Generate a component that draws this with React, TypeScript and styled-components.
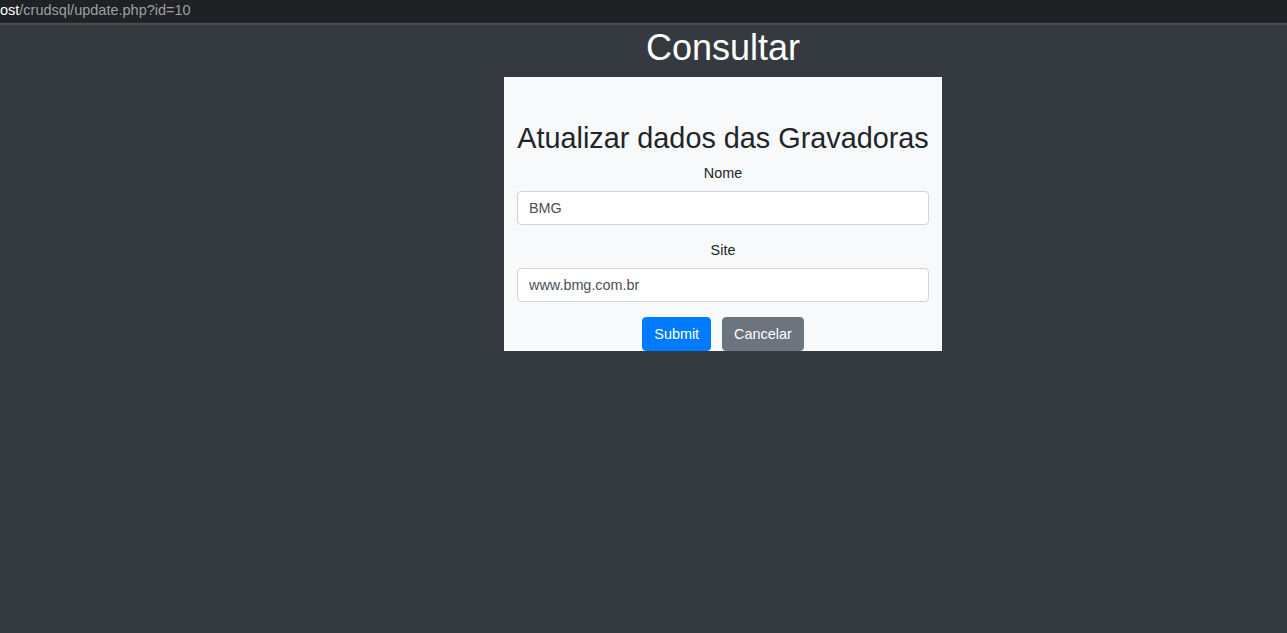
import React from "react";
import styled, { createGlobalStyle } from "styled-components";

const GlobalStyle = createGlobalStyle`
  html, body {
    margin: 0;
    padding: 0;
    background: #343a40;
    font-family: "Liberation Sans", Arial, sans-serif;
  }
  * { box-sizing: border-box; }
`;

const Page = styled.div`
  width: 1287px;
  height: 633px;
  background: #343a40;
  overflow: hidden;
`;

const AddressBar = styled.div`
  height: 23px;
  padding-bottom: 2px;
  background: #202124;
  border-bottom: 1px solid #2a2b2e;
  display: flex;
  align-items: center;
  font-family: "Liberation Sans", Arial, sans-serif;
  font-size: 14.5px;
  color: #9aa0a6;
  white-space: nowrap;
`;

const Host = styled.span`
  color: #ffffff;
`;

const Divider = styled.div`
  height: 2px;
  background: #4a4c50;
`;

const Main = styled.main`
  display: grid;
  grid-template-columns: 504px 438px 1fr;
`;

const Column = styled.div`
  grid-column: 2;
  display: flex;
  flex-direction: column;
`;

const PageTitle = styled.h1`
  margin: 1px 0 8px;
  font-size: 36px;
  line-height: 43px;
  font-weight: 400;
  color: #ffffff;
  text-align: center;
  white-space: nowrap;
`;

const Panel = styled.form`
  background: #f8f9fa;
  padding: 44px 13px 0;
  height: 274px;
  overflow: hidden;
  text-align: center;
`;

const PanelTitle = styled.h3`
  margin: 0 0 6px;
  font-size: 28.8px;
  line-height: 35px;
  font-weight: 400;
  color: #212529;
  white-space: nowrap;
`;

const Group = styled.div<{ $last?: boolean }>`
  margin-bottom: ${(p) => (p.$last ? "15px" : "14px")};
`;

const Label = styled.label`
  display: block;
  margin-bottom: 7px;
  font-size: 14.4px;
  line-height: 22px;
  color: #212529;
`;

const Input = styled.input`
  display: block;
  width: 100%;
  height: 34px;
  padding: 0 11px;
  font-family: "Liberation Sans", Arial, sans-serif;
  font-size: 14.4px;
  color: #495057;
  background: #ffffff;
  border: 1px solid #ced4da;
  border-radius: 4px;
  outline: none;
`;

const Actions = styled.div`
  display: flex;
  justify-content: center;
  gap: 11px;
`;

const Button = styled.button<{ $variant: "primary" | "secondary" }>`
  height: 34px;
  padding: 0 11px;
  font-family: "Liberation Sans", Arial, sans-serif;
  font-size: 14.4px;
  color: #ffffff;
  border: 1px solid ${(p) => (p.$variant === "primary" ? "#007bff" : "#6c757d")};
  background: ${(p) => (p.$variant === "primary" ? "#007bff" : "#6c757d")};
  border-radius: 4px;
  cursor: pointer;
`;

export default function App() {
  return (
    <Page>
      <GlobalStyle />
      <AddressBar>
        <Host>ost</Host>/crudsql/update.php?id=10
      </AddressBar>
      <Divider />
      <Main>
        <Column>
          <PageTitle>Consultar</PageTitle>
          <Panel onSubmit={(e) => e.preventDefault()}>
            <PanelTitle>Atualizar dados das Gravadoras</PanelTitle>
            <Group>
              <Label htmlFor="nome">Nome</Label>
              <Input id="nome" defaultValue="BMG" />
            </Group>
            <Group $last>
              <Label htmlFor="site">Site</Label>
              <Input id="site" defaultValue="www.bmg.com.br" />
            </Group>
            <Actions>
              <Button $variant="primary" type="submit">Submit</Button>
              <Button $variant="secondary" type="button">Cancelar</Button>
            </Actions>
          </Panel>
        </Column>
      </Main>
    </Page>
  );
}
